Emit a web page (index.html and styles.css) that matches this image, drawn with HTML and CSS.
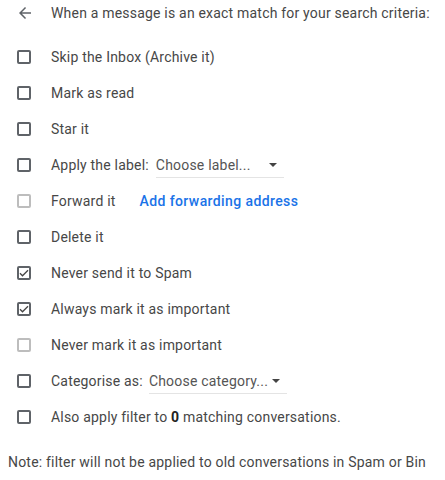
FILE: index.html
```html
<!DOCTYPE html>
<html lang="en">
<head>
    <meta charset="UTF-8" />
    <title>Filter actions</title>
    <link rel="stylesheet" href="styles.css">
</head>
<body>
    <div class="filter-panel">
        <div class="panel-header">
            <svg class="back-arrow" viewBox="0 0 24 24" width="18" height="18"><path d="M20 11H7.83l5.59-5.59L12 4l-8 8 8 8 1.41-1.41L7.83 13H20v-2z"/></svg>
            <span>When a message is an exact match for your search criteria:</span>
        </div>

        <div class="option-list">
            <label class="option"><span class="box"></span>Skip the Inbox (Archive it)</label>
            <label class="option"><span class="box"></span>Mark as read</label>
            <label class="option"><span class="box"></span>Star it</label>
            <label class="option"><span class="box"></span>Apply the label:
                <span class="select select-label">Choose label...<span class="caret"></span></span>
            </label>
            <label class="option"><span class="box disabled"></span>Forward it
                <a class="link" href="#">Add forwarding address</a>
            </label>
            <label class="option"><span class="box"></span>Delete it</label>
            <label class="option"><span class="box checked"><svg viewBox="0 0 24 24" width="12" height="12"><path d="M4 12.5l5 5L20 6.5" fill="none" stroke="#444" stroke-width="2.6"/></svg></span>Never send it to Spam</label>
            <label class="option"><span class="box checked"><svg viewBox="0 0 24 24" width="12" height="12"><path d="M4 12.5l5 5L20 6.5" fill="none" stroke="#444" stroke-width="2.6"/></svg></span>Always mark it as important</label>
            <label class="option"><span class="box disabled"></span>Never mark it as important</label>
            <label class="option"><span class="box"></span>Categorise as:
                <span class="select select-category">Choose category...<span class="caret"></span></span>
            </label>
            <label class="option"><span class="box"></span>Also apply filter to&nbsp;<b>0</b>&nbsp;matching conversations.</label>
        </div>

        <p class="note">Note: filter will not be applied to old conversations in Spam or Bin</p>
    </div>
</body>
</html>
```

FILE: styles.css
```css
body {
    margin: 0;
    background: #fff;
    font-family: Roboto, "Liberation Sans", Arial, sans-serif;
    font-size: 14px;
    letter-spacing: 0.2px;
    color: #474747;
}
.filter-panel {
    width: 445px;
}
.panel-header {
    display: flex;
    align-items: center;
    height: 26px;
    padding-left: 16px;
}
.back-arrow {
    fill: #5f6368;
    margin-right: 17px;
}
.option-list {
    margin-top: 13px;
}
.option {
    display: flex;
    align-items: center;
    height: 36px;
    padding-left: 17px;
    white-space: nowrap;
}
.option b {
    font-weight: 700;
    color: #222;
}
.box {
    width: 10px;
    height: 10px;
    border: 2px solid #5f6368;
    border-radius: 2px;
    margin-right: 20px;
    display: flex;
    align-items: center;
    justify-content: center;
    flex-shrink: 0;
}
.box.disabled {
    border-color: #bdbdbd;
}
.box svg {
    flex-shrink: 0;
}
.select {
    position: relative;
    display: inline-flex;
    align-items: center;
    height: 24px;
    border-bottom: 1px solid #e4e4e4;
    color: #555;
}
.select-label {
    margin-left: 7px;
    width: 128px;
}
.select-category {
    margin-left: 6px;
    width: 138px;
}
.caret {
    position: absolute;
    right: 7px;
    top: 10px;
    width: 0;
    height: 0;
    border-left: 4px solid transparent;
    border-right: 4px solid transparent;
    border-top: 4px solid #444;
}
.link {
    margin-left: 24px;
    color: #1a73e8;
    font-weight: 500;
    letter-spacing: 0.4px;
    text-decoration: none;
}
.note {
    margin: 19px 0 0 8px;
    line-height: 16px;
}
```
